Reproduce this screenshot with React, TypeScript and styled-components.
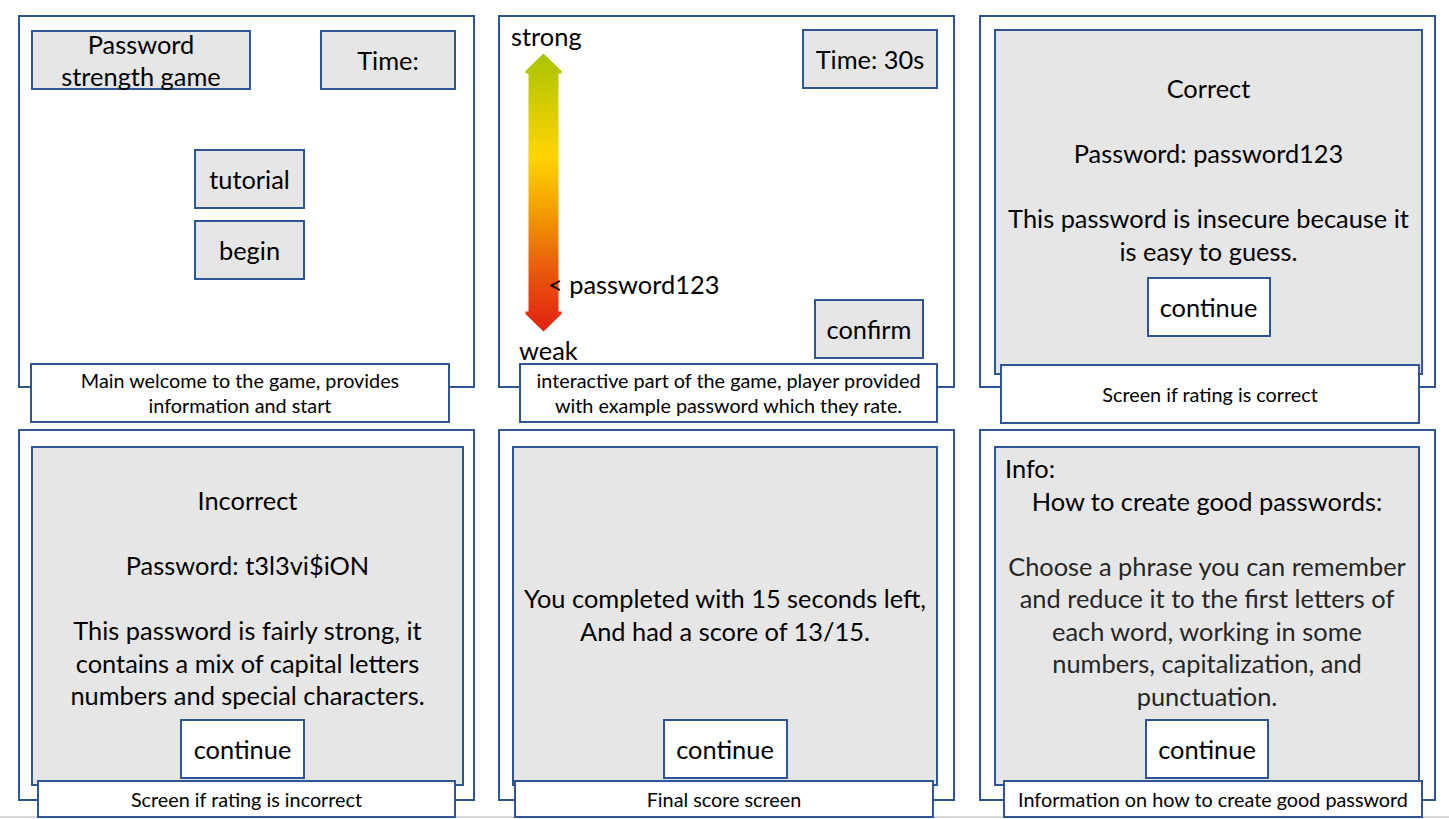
import React from "react";
import styled, { createGlobalStyle } from "styled-components";

const BLUE = "#2f5597";
const GREY = "#e6e6e6";
const MAIN_SIZE = "25.4px";

const GlobalStyle = createGlobalStyle`
  html, body { margin: 0; padding: 0; background: #ffffff; }
  body { font-family: Lato, "Open Sans", "Liberation Sans", sans-serif; color: #000; }
  * { box-sizing: border-box; }
`;

const Page = styled.div`
  width: 1449px;
  height: 818px;
  padding: 15px 0 0 18px;
  border-bottom: 2px solid #d9d9d9;
  display: grid;
  grid-template-columns: 480px 481px 457px;
  grid-template-rows: 414px auto;
  align-items: start;
`;

const Cell = styled.div`
  display: flex;
  flex-direction: column;
  align-items: flex-start;
`;

const Frame = styled.div<{ $h: number; $pad: string; $row?: boolean }>`
  width: 457px;
  height: ${(p) => p.$h}px;
  border: 2px solid ${BLUE};
  background: #ffffff;
  padding: ${(p) => p.$pad};
  display: flex;
  flex-direction: ${(p) => (p.$row ? "row" : "column")};
`;

const Caption = styled.div<{ $ml: number; $mt: number; $h: number; $w: number }>`
  position: relative;
  z-index: 1;
  margin-left: ${(p) => p.$ml}px;
  margin-top: ${(p) => p.$mt}px;
  width: ${(p) => p.$w}px;
  height: ${(p) => p.$h}px;
  border: 2px solid ${BLUE};
  background: #ffffff;
  display: flex;
  align-items: center;
  justify-content: center;
  text-align: center;
  font-size: 19.8px;
  line-height: 25px;
  white-space: nowrap;
  color: #000;
`;

const Box = styled.div<{ $w: number; $h?: number; $white?: boolean }>`
  width: ${(p) => p.$w}px;
  height: ${(p) => p.$h ?? 60}px;
  flex: none;
  border: 2px solid ${BLUE};
  background: ${(p) => (p.$white ? "#ffffff" : GREY)};
  display: flex;
  align-items: center;
  justify-content: center;
  text-align: center;
  font-size: ${MAIN_SIZE};
  line-height: 32px;
  white-space: nowrap;
`;

const TopRow = styled.div`
  display: flex;
  justify-content: space-between;
  align-items: flex-start;
`;

const ButtonStack = styled.div`
  align-self: center;
  margin: 59px 0 0 12px;
  display: flex;
  flex-direction: column;
  gap: 11px;
`;

const Scale = styled.div`
  position: relative;
  width: 110px;
  display: flex;
  flex-direction: column;
  align-items: flex-start;
`;

const ScaleLabel = styled.div<{ $ml: number; $mt: number }>`
  margin-left: ${(p) => p.$ml}px;
  margin-top: ${(p) => p.$mt}px;
  font-size: ${MAIN_SIZE};
  line-height: 28px;
  white-space: nowrap;
`;

const ArrowSvg = styled.svg`
  display: block;
  margin: 3px 0 0 25px;
`;

const PasswordTag = styled.div`
  position: absolute;
  left: 48px;
  top: 253px;
  font-size: ${MAIN_SIZE};
  line-height: 28px;
  white-space: nowrap;
`;

const RightColumn = styled.div`
  flex: 1;
  display: flex;
  flex-direction: column;
  align-items: flex-end;
  padding-top: 12px;
`;

const ConfirmSlot = styled.div`
  margin: 210px 14px 0 0;
`;

const GreyPanel = styled.div<{ $pt: number }>`
  flex: 1;
  background: ${GREY};
  border: 2px solid ${BLUE};
  padding-top: ${(p) => p.$pt}px;
  display: flex;
  flex-direction: column;
  align-items: center;
`;

const TextBlock = styled.div`
  width: 100%;
  text-align: center;
  font-size: ${MAIN_SIZE};
  line-height: 32.5px;
  color: #000;
`;

const Line = styled.div<{ $left?: boolean; $tone?: string }>`
  min-height: 32.5px;
  white-space: nowrap;
  text-align: ${(p) => (p.$left ? "left" : "center")};
  padding-left: ${(p) => (p.$left ? "9px" : "0")};
  color: ${(p) => p.$tone ?? "inherit"};
`;

const ButtonSlot = styled.div<{ $mt?: number; $auto?: boolean; $shift?: number }>`
  margin-top: ${(p) => (p.$auto ? "auto" : `${p.$mt ?? 0}px`)};
  margin-bottom: ${(p) => (p.$auto ? "5px" : "0")};
  margin-right: ${(p) => (p.$shift ?? 0) * 2}px;
`;

const StrengthArrow = () => (
  <ArrowSvg width="37" height="279" viewBox="0 0 37 279">
    <defs>
      <linearGradient id="strengthGrad" x1="0" y1="0" x2="0" y2="1">
        <stop offset="0" stopColor="#a9c400" />
        <stop offset="0.37" stopColor="#ffd500" />
        <stop offset="0.56" stopColor="#f4a000" />
        <stop offset="0.76" stopColor="#e8600c" />
        <stop offset="1" stopColor="#e21f12" />
      </linearGradient>
    </defs>
    <path
      d="M18.5 0.5 L36.5 18 L36.5 20.5 L33.5 20.5 L33.5 258.5 L36.5 258.5 L36.5 261 L18.5 278.5 L0.5 261 L0.5 258.5 L3.5 258.5 L3.5 20.5 L0.5 20.5 L0.5 18 Z"
      fill="url(#strengthGrad)"
    />
  </ArrowSvg>
);

export default function App() {
  return (
    <>
      <GlobalStyle />
      <Page>
        {/* Panel 1 */}
        <Cell>
          <Frame $h={373} $pad="13px 17px 0 11px">
            <TopRow>
              <Box $w={220}>
                <div>
                  Password
                  <br />
                  strength game
                </div>
              </Box>
              <Box $w={136}>Time:</Box>
            </TopRow>
            <ButtonStack>
              <Box $w={111}>tutorial</Box>
              <Box $w={111}>begin</Box>
            </ButtonStack>
          </Frame>
          <Caption $ml={12} $mt={-25} $h={60} $w={420}>
            <div>
              Main welcome to the game, provides
              <br />
              information and start
            </div>
          </Caption>
        </Cell>

        {/* Panel 2 */}
        <Cell>
          <Frame $h={373} $pad="0 15px 0 0" $row>
            <Scale>
              <ScaleLabel $ml={11} $mt={5}>strong</ScaleLabel>
              <StrengthArrow />
              <ScaleLabel $ml={19} $mt={4}>weak</ScaleLabel>
              <PasswordTag>&lt; password123</PasswordTag>
            </Scale>
            <RightColumn>
              <Box $w={136}>Time: 30s</Box>
              <ConfirmSlot>
                <Box $w={110}>confirm</Box>
              </ConfirmSlot>
            </RightColumn>
          </Frame>
          <Caption $ml={21} $mt={-25} $h={60} $w={419}>
            <div>
              interactive part of the game, player provided
              <br />
              with example password which they rate.
            </div>
          </Caption>
        </Cell>

        {/* Panel 3 */}
        <Cell>
          <Frame $h={373} $pad="12px 11px 11px 13px">
            <GreyPanel $pt={41}>
              <TextBlock>
                <Line>Correct</Line>
                <Line />
                <Line>Password: password123</Line>
                <Line />
                <Line>This password is insecure because it</Line>
                <Line>is easy to guess.</Line>
              </TextBlock>
              <ButtonSlot $mt={10}>
                <Box $w={124} $white>continue</Box>
              </ButtonSlot>
            </GreyPanel>
          </Frame>
          <Caption $ml={21} $mt={-24} $h={60} $w={420}>
            Screen if rating is correct
          </Caption>
        </Cell>

        {/* Panel 4 */}
        <Cell>
          <Frame $h={372} $pad="15px 9px 13px 11px">
            <GreyPanel $pt={36}>
              <TextBlock>
                <Line>Incorrect</Line>
                <Line />
                <Line>Password: t3l3vi$iON</Line>
                <Line />
                <Line>This password is fairly strong, it</Line>
                <Line>contains a mix of capital letters</Line>
                <Line>numbers and special characters.</Line>
              </TextBlock>
              <ButtonSlot $auto $shift={5}>
                <Box $w={125} $white>continue</Box>
              </ButtonSlot>
            </GreyPanel>
          </Frame>
          <Caption $ml={19} $mt={-21} $h={38} $w={419}>
            Screen if rating is incorrect
          </Caption>
        </Cell>

        {/* Panel 5 */}
        <Cell>
          <Frame $h={372} $pad="15px 15px 13px 12px">
            <GreyPanel $pt={134}>
              <TextBlock>
                <Line>You completed with 15 seconds left,</Line>
                <Line>And had a score of 13/15.</Line>
              </TextBlock>
              <ButtonSlot $auto>
                <Box $w={125} $white>continue</Box>
              </ButtonSlot>
            </GreyPanel>
          </Frame>
          <Caption $ml={16} $mt={-21} $h={38} $w={420}>
            Final score screen
          </Caption>
        </Cell>

        {/* Panel 6 */}
        <Cell>
          <Frame $h={372} $pad="15px 14px 13px 13px">
            <GreyPanel $pt={4}>
              <TextBlock>
                <Line $left>Info:</Line>
                <Line>How to create good passwords:</Line>
                <Line />
                <Line $tone="#262626">Choose a phrase you can remember</Line>
                <Line $tone="#262626">and reduce it to the first letters of</Line>
                <Line $tone="#262626">each word, working in some</Line>
                <Line $tone="#262626">numbers, capitalization, and</Line>
                <Line $tone="#262626">punctuation.</Line>
              </TextBlock>
              <ButtonSlot $auto>
                <Box $w={124} $white>continue</Box>
              </ButtonSlot>
            </GreyPanel>
          </Frame>
          <Caption $ml={24} $mt={-21} $h={38} $w={420}>
            Information on how to create good password
          </Caption>
        </Cell>
      </Page>
    </>
  );
}
